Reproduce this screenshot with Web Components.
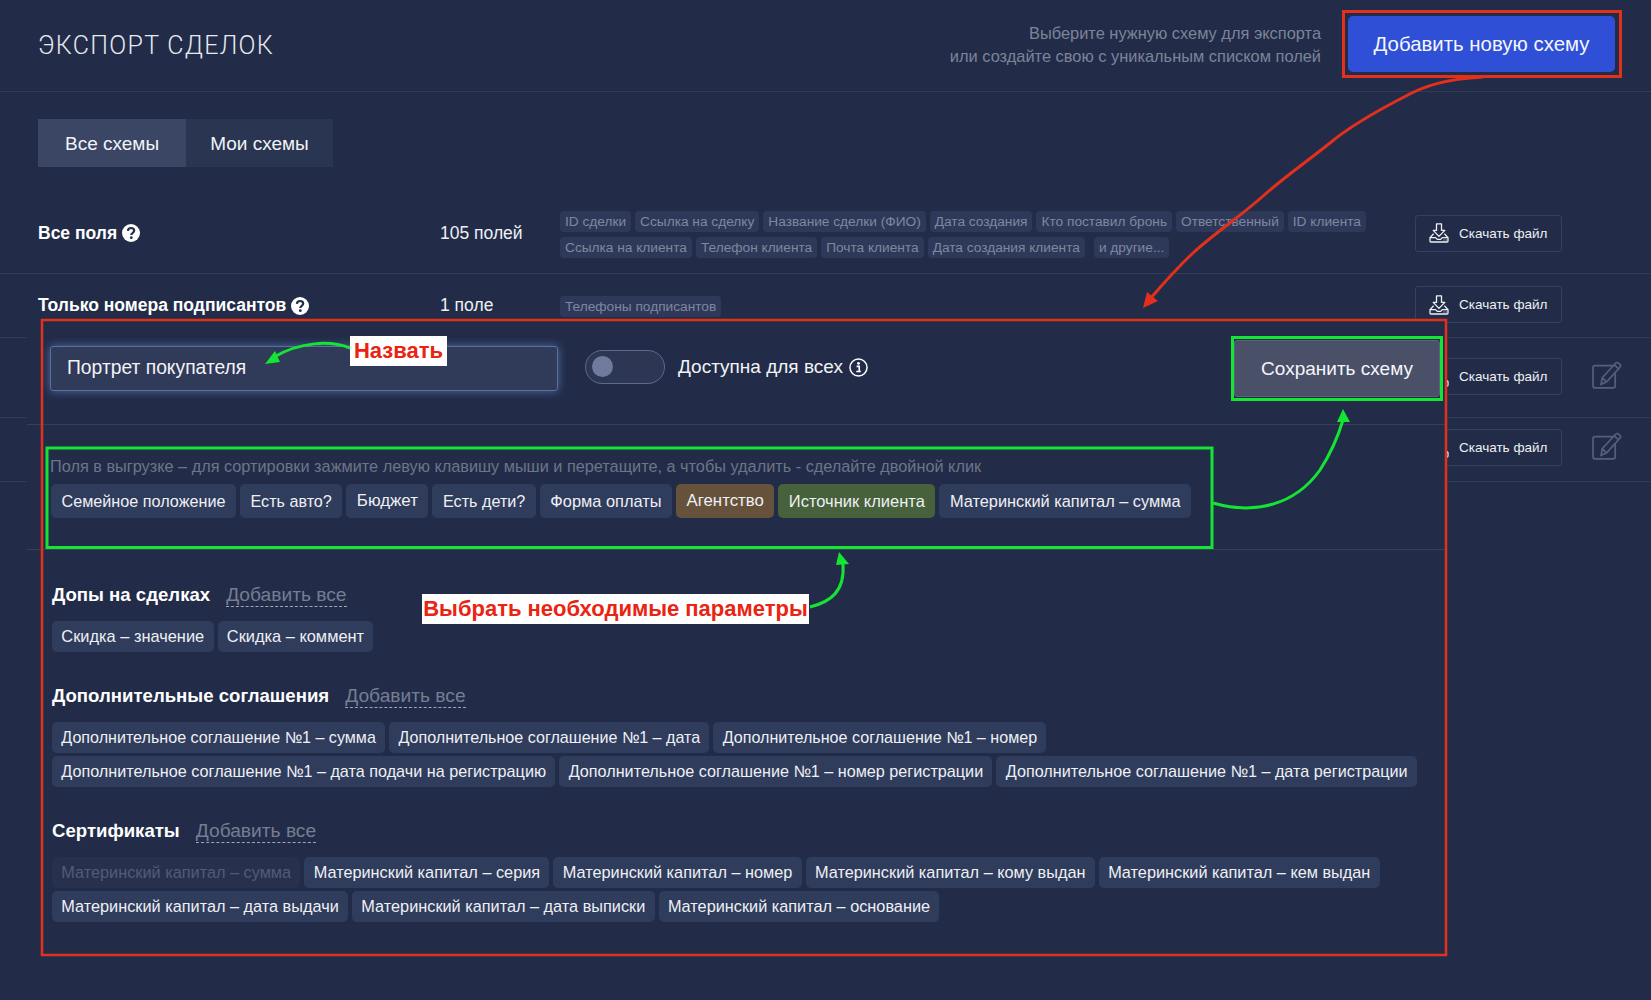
<!DOCTYPE html>
<html lang="ru">
<head>
<meta charset="utf-8">
<title>Экспорт сделок</title>
<style>
html,body{margin:0;padding:0;background:#222c48;}
body{font-family:"Liberation Sans",Arial,sans-serif;color:#f1f3f7;}
</style>
</head>
<body>
<x-app></x-app>
<script>
const ICONS={
 help:`<svg width="18" height="18" viewBox="0 0 18 18" aria-hidden="true"><circle cx="9" cy="9" r="9" fill="#fff"/><path d="M5.900 6.900C6 5 7.300 4 9.100 4c1.800 0 3.100 1.100 3.100 2.600 0 1.300-.8 1.900-1.700 2.500-.8.500-1.200 1-1.200 1.800" fill="none" stroke="#222c48" stroke-width="2.200"/><circle cx="9.300" cy="13.700" r="1.400" fill="#222c48"/></svg>`,
 info:`<svg width="19" height="19" viewBox="0 0 18 18" aria-hidden="true"><circle cx="9" cy="9" r="8.100" fill="none" stroke="#fff" stroke-width="1.400"/><circle cx="9" cy="5.200" r="1.300" fill="#fff"/><path d="M7.200 7.900H9.700V12.800H11.200M6.900 12.800H11.200" fill="none" stroke="#fff" stroke-width="1.500"/></svg>`,
 download:`<svg width="20" height="20" viewBox="0 0 20 20" aria-hidden="true" fill="none" stroke="#eef0f5" stroke-width="1.300" stroke-linejoin="round"><path d="M7.500 .8h5v6.600h3.300L10 13.400 4.200 7.400h3.300z"/><path d="M4.600 10.800 1 14.600V18c0 .6.400 1 1 1h16c.6 0 1-.4 1-1v-3.400l-3.600-3.800"/><path d="M1 14.600h5.600l1.800 1.800h3.200l1.800-1.800H19"/><path d="M14.600 17h.9M16.800 17h.9" stroke-width="1.200"/></svg>`,
 edit:`<svg width="32" height="28" viewBox="0 0 32 28" aria-hidden="true" fill="none" stroke="#566079" stroke-width="1.700" stroke-linejoin="round"><path d="M23 4.600H4c-1.200 0-2 .8-2 2v18.200c0 1.200.8 2 2 2h18.200c1.200 0 2-.8 2-2V12"/><path d="M10 23.600l1.200-6.800L24.600 2.200c.8-.9 2-.9 2.900-.1l1.400 1.300c.9.800.9 2 .1 2.900L15.600 20.800z"/><path d="M23.300 3.800l4.400 4.200M11.400 17l4 3.600"/></svg>`
};

class XChip extends HTMLElement{
 constructor(){super();this.attachShadow({mode:'open'}).innerHTML=`<style>
 :host{display:inline-flex;align-items:center;box-sizing:border-box;height:31px;padding:0 9.300px;border-radius:5px;background:#303c5c;color:#eef0f4;font-size:var(--fs,16.200px);white-space:nowrap;}
 :host([tall]){height:34px;padding:0 10.500px;font-size:var(--fs,16.350px);}
 :host([tone=brown]){background:#66523a;}
 :host([tone=green]){background:#46613b;}
 :host([tone=off]){background:#27314e;color:#535c75;}
 :host([small]){height:21px;padding:0 5px;border-radius:4px;background:#2e395a;color:#7f879e;font-size:13.700px;}
 :host([far]){margin-left:5px;}
 </style><slot></slot>`;}
}
class XTabs extends HTMLElement{
 constructor(){super();this.attachShadow({mode:'open'}).innerHTML=`<style>
 :host{display:flex;margin:27px 0 27px 38px;width:max-content;}
 div{display:flex;align-items:center;justify-content:center;box-sizing:border-box;height:48px;padding-top:2px;font-size:19px;color:#f1f3f7;}
 .on{width:148px;background:#3a4664;}
 .off{width:147px;background:#2a3551;}
 </style><div class="on">Все схемы</div><div class="off">Мои схемы</div>`;}
}
class XHead extends HTMLElement{
 constructor(){super();this.attachShadow({mode:'open'}).innerHTML=`<style>
 :host{display:flex;align-items:center;box-sizing:border-box;height:92px;padding:0 36px 4px 38px;border-bottom:1px solid #303b57;}
 h1{flex:1;margin:4px 0 0;font:300 25px Roboto,"Liberation Sans",sans-serif;letter-spacing:1.300px;color:#e6e9ef;}
 p{margin:2px 27px 0 0;text-align:right;font-size:16.400px;line-height:22.500px;color:#7d8498;}
 button{box-sizing:border-box;width:267px;height:56px;padding:2px 0 0;border:0;border-radius:5px;background:#2f4fd6;color:#f4f6fb;font:20.400px "Liberation Sans",Arial,sans-serif;}
 </style><h1>ЭКСПОРТ СДЕЛОК</h1><p>Выберите нужную схему для экспорта<br>или создайте свою с уникальным списком полей</p><button>Добавить новую схему</button>`;}
}
class XRow extends HTMLElement{
 constructor(){super();this.attachShadow({mode:'open'}).innerHTML=`<style>
 :host{display:grid;grid-template-columns:402px 120px 855px 147px 176px;align-items:center;box-sizing:border-box;height:var(--h);padding:var(--t) 0 0 38px;border-bottom:1px solid #303b57;align-content:start;}
 .name{display:flex;align-items:center;gap:5px;font-size:17.500px;font-weight:700;color:#fff;margin-bottom:var(--dy,0);}
 .count{font-size:17.500px;color:#eef0f4;margin-bottom:var(--dy,0);}
 .chips{display:flex;flex-wrap:wrap;gap:5px 4px;min-width:0;padding-right:30px;box-sizing:border-box;margin-top:var(--cy,0);}
 .dl{display:flex;align-items:center;gap:10px;box-sizing:border-box;width:147px;height:37px;padding-left:13px;border:1px solid #364160;border-radius:3px;font-size:13.500px;color:#eef0f4;margin-bottom:var(--dd,0);}
 .edit{display:flex;padding-left:29px;margin-bottom:3px;}
 svg{display:block;flex:none;}
 </style><div class="name"><slot name="name"></slot><span id="help"></span></div><div class="count"><slot name="count"></slot></div><div class="chips"><slot></slot></div><div class="dl">${ICONS.download}<span>Скачать файл</span></div><div class="edit" id="edit"></div>`;}
 connectedCallback(){
  const s=this.shadowRoot;
  if(this.hasAttribute('help'))s.getElementById('help').innerHTML=ICONS.help;
  if(this.hasAttribute('editable'))s.getElementById('edit').innerHTML=ICONS.edit;
 }
}
class XGroup extends HTMLElement{
 constructor(){super();this.attachShadow({mode:'open'}).innerHTML=`<style>
 :host{display:block;padding-top:var(--gap,32px);}
 header{display:flex;align-items:center;gap:16px;height:24px;margin-bottom:14px;}
 b{font-size:18.600px;color:#fff;}
 span{font-size:19.200px;line-height:22px;color:#767d92;border-bottom:1px dashed #a0a6b8;margin-top:1px;}
 div{display:flex;flex-wrap:wrap;gap:3px 4px;}
 </style><header><b id="t"></b><span>Добавить все</span></header><div><slot></slot></div>`;}
 connectedCallback(){this.shadowRoot.getElementById('t').textContent=this.getAttribute('title');this.removeAttribute('title');}
}
class XPanel extends HTMLElement{
 constructor(){super();this.attachShadow({mode:'open'}).innerHTML=`<style>
 :host{position:absolute;left:27px;top:320px;width:1419px;height:640px;background:#222c48;}
 .top{display:flex;align-items:center;box-sizing:border-box;height:105px;padding:20px 6px 27px 23px;border-bottom:1px solid #364059;}
 .input{display:flex;align-items:center;box-sizing:border-box;width:508px;height:45px;padding-left:16px;border:1px solid #5d709c;border-radius:3px;background:#303a59;box-shadow:0 0 10px rgba(110,150,225,.6);font-size:19.300px;color:#f1f3f7;margin-top:-1px;}
 .toggle{box-sizing:border-box;width:80px;height:34px;margin-left:27px;padding:5px 6px;border:1.500px solid #5a6a90;border-radius:17px;background:#2d3754;margin-top:-3px;}
 .toggle i{display:block;width:21px;height:21px;border-radius:50%;background:#6f7a9c;}
 .lbl{display:flex;align-items:center;gap:6px;margin-left:13px;font-size:19px;color:#f1f3f7;margin-top:-3px;}
 .save{margin-left:auto;box-sizing:border-box;width:206px;height:57px;border:1px solid #5c6279;border-radius:3px;background:#4a5068;color:#f4f6fb;font:19px "Liberation Sans",Arial,sans-serif;}
 .fields{box-sizing:border-box;height:125px;padding:31px 0 0 23px;border-bottom:1px solid #364059;}
 .fields p{margin:0 0 8px;font-size:16.300px;line-height:20px;color:#6e7589;}
 .fields div{display:flex;gap:4px;padding-left:1px;}
 .groups{padding:0 25px;}
 svg{display:block;}
 </style>
 <div class="top"><div class="input">Портрет покупателя</div><div class="toggle"><i></i></div><div class="lbl">Доступна для всех ${ICONS.info}</div><button class="save">Сохранить схему</button></div>
 <div class="fields"><p>Поля в выгрузке – для сортировки зажмите левую клавишу мыши и перетащите, а чтобы удалить - сделайте двойной клик</p><div><slot name="picked"></slot></div></div>
 <div class="groups"><slot></slot></div>`;}
}
class XAnnot extends HTMLElement{
 constructor(){super();this.attachShadow({mode:'open'}).innerHTML=`<style>
 :host{position:absolute;left:0;top:0;width:1651px;height:1000px;pointer-events:none;}
 svg{position:absolute;left:0;top:0;}
 .tag{position:absolute;display:flex;align-items:center;justify-content:center;background:#fff;color:#ea2412;font-size:22px;font-weight:700;white-space:nowrap;}
 </style>
 <svg width="1651" height="1000" fill="none">
  <rect x="1343.500" y="11.500" width="277" height="65" stroke="#e2301c" stroke-width="3"/>
  <rect x="42" y="320" width="1404" height="635" stroke="#e2301c" stroke-width="2.500"/>
  <rect x="1232.500" y="337.500" width="209" height="62" stroke="#14e433" stroke-width="3"/>
  <rect x="47" y="448" width="1165" height="99.500" stroke="#14e433" stroke-width="3"/>
  <path d="M1483 77C1445 79 1424 86 1404 97C1375 112 1350 126 1330 143C1305 163 1283 178 1262 197C1238 218 1215 233 1193 253C1175 270 1162 285 1150 299" stroke="#e2301c" stroke-width="3"/>
  <polygon points="1143,308 1147,292 1158,301" fill="#e2301c"/>
  <path d="M350 348C330 340 300 342 274 357" stroke="#14e433" stroke-width="3"/>
  <polygon points="265,364 275,351 280,362" fill="#14e433"/>
  <path d="M1213 503C1255 515 1295 505 1320 470C1333 450 1340 430 1343 420" stroke="#14e433" stroke-width="3"/>
  <polygon points="1343,409 1337,422 1350,422" fill="#14e433"/>
  <path d="M810 607C830 602 845 592 843 564" stroke="#14e433" stroke-width="3"/>
  <polygon points="839,552 836,565 849,564" fill="#14e433"/>
 </svg>
 <div class="tag" style="left:350px;top:336px;width:97px;height:30px">Назвать</div>
 <div class="tag" style="left:422px;top:594px;width:387px;height:30px">Выбрать необходимые параметры</div>`;}
}
class XApp extends HTMLElement{
 constructor(){super();this.attachShadow({mode:'open'}).innerHTML=`<style>
 :host{display:block;position:relative;width:1651px;height:1000px;overflow:hidden;background:#222c48;}
 </style>
 <x-head></x-head>
 <x-tabs></x-tabs>
 <x-row help style="--h:80px;--t:17px;--dy:3px;--dd:3px">
  <span slot="name">Все поля</span><span slot="count">105 полей</span>
  <x-chip small>ID сделки</x-chip><x-chip small>Ссылка на сделку</x-chip><x-chip small>Название сделки (ФИО)</x-chip><x-chip small>Дата создания</x-chip><x-chip small>Кто поставил бронь</x-chip><x-chip small>Ответственный</x-chip><x-chip small>ID клиента</x-chip><x-chip small>Ссылка на клиента</x-chip><x-chip small>Телефон клиента</x-chip><x-chip small>Почта клиента</x-chip><x-chip small>Дата создания клиента</x-chip><x-chip small far>и другие...</x-chip>
 </x-row>
 <x-row help style="--h:64px;--t:12px;--dy:-2px;--cy:3px">
  <span slot="name">Только номера подписантов</span><span slot="count">1 поле</span>
  <x-chip small>Телефоны подписантов</x-chip>
 </x-row>
 <x-row editable style="--h:80px;--t:20px"></x-row>
 <x-row editable style="--h:64px;--t:11px"></x-row>
 <x-panel>
  <x-chip tall slot="picked" style="--fs:16.200px">Семейное положение</x-chip><x-chip tall slot="picked" style="--fs:16.150px">Есть авто?</x-chip><x-chip tall slot="picked" style="--fs:16.900px">Бюджет</x-chip><x-chip tall slot="picked" style="--fs:16.200px">Есть дети?</x-chip><x-chip tall slot="picked" style="--fs:16.400px">Форма оплаты</x-chip><x-chip tall slot="picked" tone="brown" style="--fs:16.800px">Агентство</x-chip><x-chip tall slot="picked" tone="green" style="--fs:16.500px">Источник клиента</x-chip><x-chip tall slot="picked">Материнский капитал – сумма</x-chip>
  <x-group title="Допы на сделках" style="--gap:33px;--fs:16.400px"><x-chip>Скидка – значение</x-chip><x-chip>Скидка – коммент</x-chip></x-group>
  <x-group title="Дополнительные соглашения"><x-chip style="--fs:16.100px">Дополнительное соглашение №1 – сумма</x-chip><x-chip style="--fs:16.100px">Дополнительное соглашение №1 – дата</x-chip><x-chip style="--fs:16.100px">Дополнительное соглашение №1 – номер</x-chip><x-chip>Дополнительное соглашение №1 – дата подачи на регистрацию</x-chip><x-chip>Дополнительное соглашение №1 – номер регистрации</x-chip><x-chip>Дополнительное соглашение №1 – дата регистрации</x-chip></x-group>
  <x-group title="Сертификаты" style="--fs:16.300px"><x-chip tone="off">Материнский капитал – сумма</x-chip><x-chip>Материнский капитал – серия</x-chip><x-chip>Материнский капитал – номер</x-chip><x-chip>Материнский капитал – кому выдан</x-chip><x-chip>Материнский капитал – кем выдан</x-chip><x-chip>Материнский капитал – дата выдачи</x-chip><x-chip>Материнский капитал – дата выписки</x-chip><x-chip>Материнский капитал – основание</x-chip></x-group>
 </x-panel>
 <x-annot></x-annot>`;}
}
customElements.define('x-chip',XChip);
customElements.define('x-tabs',XTabs);
customElements.define('x-head',XHead);
customElements.define('x-row',XRow);
customElements.define('x-group',XGroup);
customElements.define('x-panel',XPanel);
customElements.define('x-annot',XAnnot);
customElements.define('x-app',XApp);
</script>
</body>
</html>
